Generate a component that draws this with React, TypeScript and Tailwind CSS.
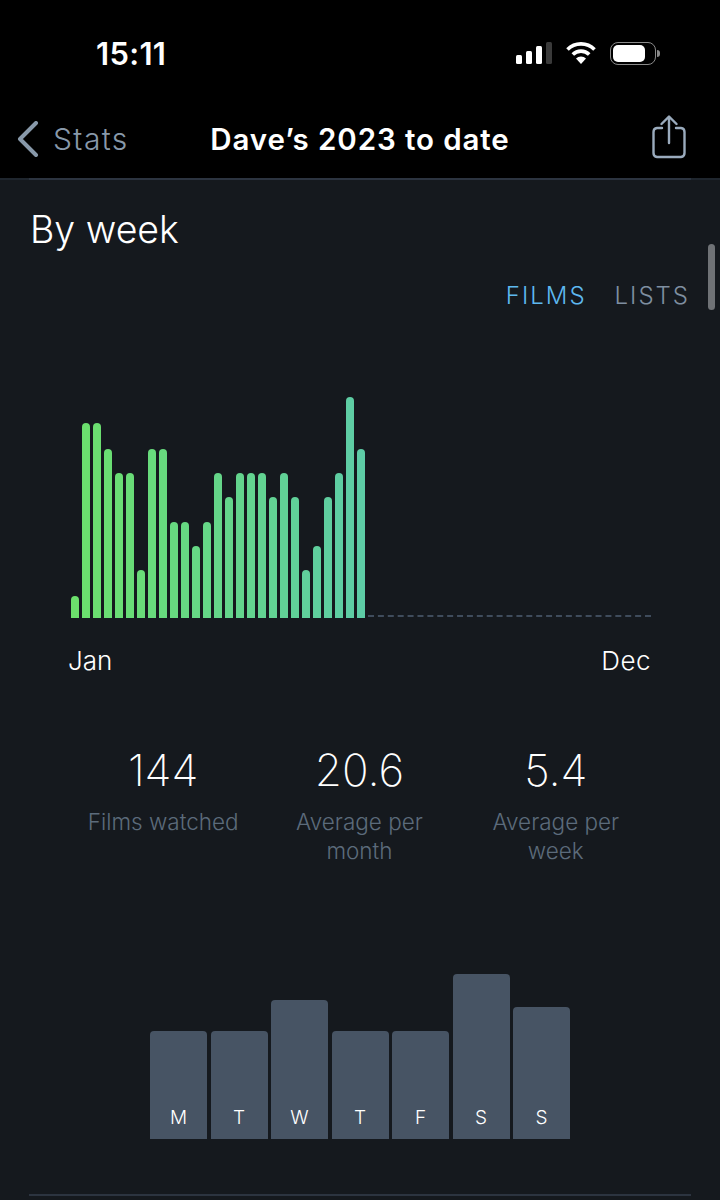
const weeks = [22, 195, 195, 169, 145, 145, 48, 169, 169, 96, 96, 72, 96, 145, 121, 145, 145, 145, 121, 145, 121, 48, 72, 121, 145, 221, 169];
const days = [
  { label: 'M', height: 108 },
  { label: 'T', height: 108 },
  { label: 'W', height: 139 },
  { label: 'T', height: 108 },
  { label: 'F', height: 108 },
  { label: 'S', height: 165 },
  { label: 'S', height: 132 },
];
const stats = [
  { value: '144', label: 'Films watched' },
  { value: '20.6', label: 'Average per month' },
  { value: '5.4', label: 'Average per week' },
];

// green at Jan drifting to teal by the last week
const barColor = (i: number) => {
  const t = i / 26;
  const r = Math.round(108 - t * 15);
  const g = Math.round(224 - t * 20);
  const b = Math.round(108 + t * 58);
  return `rgb(${r},${g},${b})`;
};

function StatusIcons() {
  return (
    <div className="flex items-center">
      <div className="flex items-end gap-[4px] h-[22px]">
        <div className="w-[6px] h-[9px] rounded-[1.5px] bg-white" />
        <div className="w-[6px] h-[13px] rounded-[1.5px] bg-white" />
        <div className="w-[6px] h-[18px] rounded-[1.5px] bg-white" />
        <div className="w-[6px] h-[22px] rounded-[1.5px] bg-[#3a3a3a]" />
      </div>
      <svg width="30" height="22" viewBox="0 0 30 22" className="ml-[14px]">
        <path d="M1.5 7.5 A19 19 0 0 1 28.5 7.5" fill="none" stroke="#fff" strokeWidth="3.6" />
        <path d="M6.8 12.6 A11.5 11.5 0 0 1 23.2 12.6" fill="none" stroke="#fff" strokeWidth="3.6" />
        <path d="M15 22 L10 16.6 A7 7 0 0 1 20 16.6 Z" fill="#fff" />
      </svg>
      <div className="flex items-center ml-[14px]">
        <div className="w-[46px] h-[23px] rounded-[8px] border-[1.5px] border-[#8a8a8a] p-[2px] pr-[10px]">
          <div className="w-full h-full rounded-[5px] bg-white" />
        </div>
        <div className="w-[3px] h-[7px] rounded-r-full bg-[#8a8a8a] ml-[1px]" />
      </div>
    </div>
  );
}

export default function App() {
  return (
    <div className="relative w-[720px] h-[1200px] overflow-hidden bg-[#15191e] text-white font-['Inter','Liberation_Sans',sans-serif]">
      <div className="bg-black h-[178px]">
        <div className="flex items-center justify-between h-[106px] pl-[96px] pr-[60px]">
          <div className="text-[31px] leading-none font-semibold tracking-[0.3px]">15:11</div>
          <StatusIcons />
        </div>
        <div className="grid grid-cols-[1fr_auto_1fr] items-center h-[66px]">
          <div className="flex items-center pl-[17px]">
            <svg width="22" height="36" viewBox="0 0 22 36" fill="none" stroke="#8899aa" strokeWidth="4" strokeLinecap="round" strokeLinejoin="round">
              <path d="M19 2 L3 18 L19 34" />
            </svg>
            <span className="ml-[14px] text-[30px] font-light tracking-[1.4px] text-[#8899aa]">Stats</span>
          </div>
          <div className="text-[29.5px] leading-[36px] -mt-[1px] font-semibold tracking-[0.9px] text-white">Dave’s 2023 to date</div>
          <div className="flex justify-end pr-[34px] -mt-[4px]">
            <svg width="34" height="44" viewBox="0 0 34 44" fill="none" stroke="#9aabbd" strokeWidth="2.4" strokeLinecap="round" strokeLinejoin="round">
              <path d="M10 13 H5 A4 4 0 0 0 1.5 17 V38 A4 4 0 0 0 5 42 H29 A4 4 0 0 0 32.5 38 V17 A4 4 0 0 0 29 13 H24" />
              <path d="M17 28 V2 M9.5 9 L17 1.5 L24.5 9" />
            </svg>
          </div>
        </div>
      </div>

      <div className="h-[2px] bg-[#1f262e]">
        <div className="mx-[29px] h-[2px] bg-[#2c3440]" />
      </div>

      <div className="pl-[30px] pt-[28px] text-[37.5px] leading-[44px] font-light">By week</div>

      <div className="flex justify-end gap-[28px] pr-[30px] mt-[29px] text-[24px] leading-[30px] font-light tracking-[2px]">
        <span className="text-[#5eb8f0]">FILMS</span>
        <span className="text-[#7f8fa0]">LISTS</span>
      </div>

      <div className="flex items-end h-[221px] ml-[71px] mr-[69px] mt-[86px]">
        <div className="flex items-end gap-[3.5px]">
          {weeks.map((h, i) => (
            <div key={i} className="w-[7.5px] rounded-t-full" style={{ height: h, backgroundColor: barColor(i) }} />
          ))}
        </div>
        <div className="flex-1 ml-[3px] mb-[1px] border-t-2 border-dashed border-[#3f4c5c]" />
      </div>

      <div className="flex justify-between ml-[68px] mr-[69px] mt-[27px] text-[26px] leading-[32px] font-light">
        <span>Jan</span>
        <span className="tracking-[0.5px]">Dec</span>
      </div>

      <div className="grid grid-cols-3 pl-[65px] pr-[66px] mt-[65px]">
        {stats.map((s) => (
          <div key={s.value} className="flex flex-col items-center text-center">
            <div className="text-[44px] leading-[56px] font-extralight">{s.value}</div>
            <div className="w-[170px] text-[22.5px] leading-[29px] font-light text-[#5c6b7b] mt-[9px]">{s.label}</div>
          </div>
        ))}
      </div>

      <div className="flex items-end justify-center gap-[3.5px] h-[165px] mt-[109px]">
        {days.map((d, i) => (
          <div key={i} className="w-[57px] rounded-t-[4px] bg-[#475464] flex items-end justify-center pb-[9px] text-[19px] leading-[24px] font-light" style={{ height: d.height }}>
            {d.label}
          </div>
        ))}
      </div>

      <div className="mx-[29px] mt-[55px] h-[2px] bg-[#2c3440]" />

      <div className="absolute right-[5px] top-[244px] w-[7px] h-[66px] rounded-full bg-[#6f7276]" />
    </div>
  );
}
